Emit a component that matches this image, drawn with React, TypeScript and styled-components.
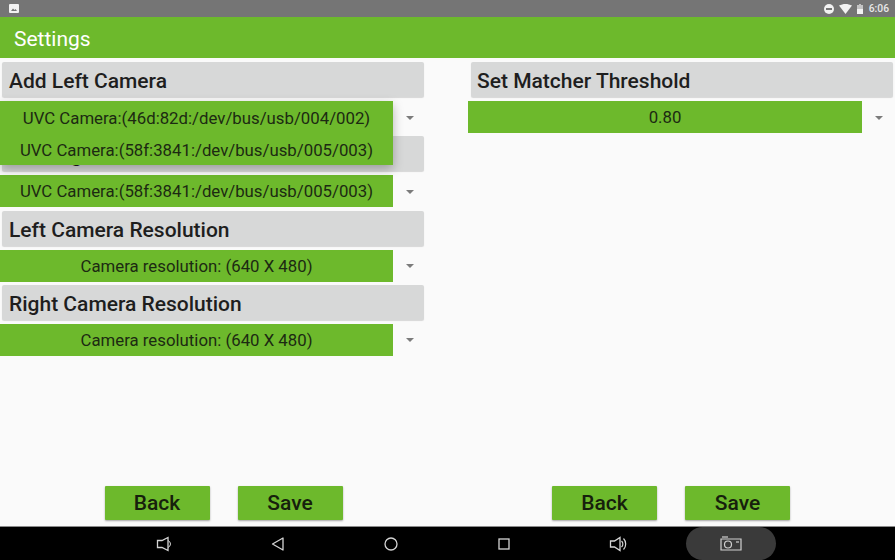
import React from 'react';
import styled, { createGlobalStyle } from 'styled-components';

const GREEN = '#6db92c';

const Global = createGlobalStyle`
  html, body { margin: 0; padding: 0; height: 100%; background: #fafafa; }
  body { font-family: Roboto, "Liberation Sans", sans-serif; overflow: hidden; }
  #root { height: 100%; }
`;

const Screen = styled.div`
  width: 895px;
  height: 560px;
  display: flex;
  flex-direction: column;
  background: #fafafa;
`;

const StatusBar = styled.div`
  height: 17px;
  flex: none;
  background: #757575;
  display: flex;
  align-items: center;
  justify-content: space-between;
  padding: 0 6px 0 9px;
  color: #f0f0f0;
`;

const StatusRight = styled.div`
  display: flex;
  align-items: center;
  gap: 5px;
`;

const Clock = styled.span`
  font-size: 10.3px;
  font-weight: 500;
  margin-left: 1px;
  color: #e8e8e8;
`;

const AppBar = styled.div`
  height: 41px;
  flex: none;
  background: ${GREEN};
  color: #fff;
  font-size: 21px;
  display: flex;
  align-items: center;
  padding: 2px 0 0 14px;
  box-sizing: border-box;
`;

const Content = styled.div`
  flex: 1;
  display: grid;
  grid-template-columns: 447px 448px;
  min-height: 0;
`;

const Column = styled.div<{ $inset: number }>`
  position: relative;
  display: flex;
  flex-direction: column;
  padding: 4px 0 0 ${({ $inset }) => $inset}px;
`;

const Section = styled.div`
  height: 74.3px;
  flex: none;
`;

const Heading = styled.div<{ $indent: number; $pad: number }>`
  width: 422px;
  height: 35px;
  margin-left: ${({ $indent }) => $indent}px;
  box-sizing: border-box;
  padding-left: ${({ $pad }) => $pad}px;
  background: #d7d8d8;
  border-radius: 2px;
  box-shadow: 0 1px 1px rgba(0, 0, 0, 0.14);
  color: #1e1e1e;
  font-size: 21px;
  font-weight: 500;
  line-height: 38px;
  white-space: nowrap;
`;

const Spinner = styled.div`
  margin-top: 4px;
  height: 32px;
  display: flex;
  align-items: center;
`;

const SpinnerValue = styled.div<{ $width: number }>`
  width: ${({ $width }) => $width}px;
  height: 100%;
  background: ${GREEN};
  color: #1c2a12;
  font-size: 16.8px;
  line-height: 33px;
  text-align: center;
  white-space: nowrap;
`;

const Caret = styled.div`
  margin-left: 13px;
  margin-top: 1px;
  width: 0;
  height: 0;
  border-left: 4px solid transparent;
  border-right: 4px solid transparent;
  border-top: 4px solid #7b7b7b;
`;

const Popup = styled.div`
  position: absolute;
  left: 0;
  top: 43px;
  width: 393px;
  height: 64px;
  background: ${GREEN};
  box-shadow: 0 4px 10px rgba(0, 0, 0, 0.28);
  color: #1c2a12;
  font-size: 16.8px;
  text-align: center;
  white-space: nowrap;
`;

const PopupItem = styled.div`
  height: 32px;
  line-height: 34px;
`;

const Actions = styled.div<{ $shift: number }>`
  margin-top: auto;
  margin-left: ${({ $shift }) => $shift}px;
  padding-bottom: 6px;
  display: flex;
  justify-content: center;
  gap: 28px;
`;

const ActionButton = styled.button`
  width: 105px;
  height: 34px;
  padding: 0;
  border: none;
  border-radius: 1px;
  background: ${GREEN};
  box-shadow: 0 1px 2px rgba(0, 0, 0, 0.35);
  color: #16200c;
  font-family: inherit;
  font-size: 21px;
  font-weight: 500;
`;

const NavBar = styled.div`
  height: 34px;
  flex: none;
  position: relative;
  background: #000;
  border-top: 1px solid #8a8a8a;
  box-sizing: border-box;
`;

const NavSlot = styled.div<{ $x: number }>`
  position: absolute;
  left: ${({ $x }) => $x}px;
  top: 8px;
  width: 18px;
  height: 18px;
  display: flex;
`;

const CameraPill = styled.div`
  position: absolute;
  left: 686px;
  top: 0;
  width: 90px;
  height: 33px;
  border-radius: 17px;
  background: #3a3a3a;
  display: flex;
  align-items: center;
  justify-content: center;
`;

const NavIcon = ({ children }: { children: React.ReactNode }) => (
  <svg width="18" height="18" viewBox="0 0 18 18" fill="none" stroke="#d4d4d4" strokeWidth="1.3">
    {children}
  </svg>
);

const leftCams = [
  { title: 'Add Left Camera', value: '' },
  { title: 'Add Right Camera', value: 'UVC Camera:(58f:3841:/dev/bus/usb/005/003)' },
  { title: 'Left Camera Resolution', value: 'Camera resolution: (640 X 480)' },
  { title: 'Right Camera Resolution', value: 'Camera resolution: (640 X 480)' },
];

const App = () => (
  <Screen>
    <Global />
    <StatusBar>
      <svg width="10" height="9" viewBox="0 0 10 9">
        <rect width="10" height="9" rx="1" fill="#f2f2f2" />
        <path d="M2 7l2-2.500 1.500 1.500 1-1L8 7z" fill="#757575" />
      </svg>
      <StatusRight>
        <svg width="10" height="10" viewBox="0 0 10 10">
          <circle cx="5" cy="5" r="5" fill="#f2f2f2" />
          <rect x="2" y="4" width="6" height="2" fill="#757575" />
        </svg>
        <svg width="13" height="10" viewBox="0 0 13 10">
          <path d="M0 1.600C4 -0.500 9 -0.500 13 1.600L6.500 10z" fill="#f2f2f2" />
        </svg>
        <svg width="6" height="10" viewBox="0 0 6 10">
          <rect x="2" y="0" width="2" height="1" fill="#c4c4c4" />
          <rect x="0" y="1" width="6" height="9" fill="#c4c4c4" />
          <rect x="0" y="5" width="6" height="5" fill="#f2f2f2" />
        </svg>
        <Clock>6:06</Clock>
      </StatusRight>
    </StatusBar>
    <AppBar>Settings</AppBar>
    <Content>
      <Column $inset={0}>
        {leftCams.map((item) => (
          <Section key={item.title}>
            <Heading $indent={2} $pad={7}>{item.title}</Heading>
            <Spinner>
              <SpinnerValue $width={393}>{item.value}</SpinnerValue>
              <Caret />
            </Spinner>
          </Section>
        ))}
        <Popup>
          <PopupItem>UVC Camera:(46d:82d:/dev/bus/usb/004/002)</PopupItem>
          <PopupItem>UVC Camera:(58f:3841:/dev/bus/usb/005/003)</PopupItem>
        </Popup>
        <Actions $shift={0}>
          <ActionButton>Back</ActionButton>
          <ActionButton>Save</ActionButton>
        </Actions>
      </Column>
      <Column $inset={21}>
        <Section>
          <Heading $indent={3} $pad={6}>Set Matcher Threshold</Heading>
          <Spinner>
            <SpinnerValue $width={394}>0.80</SpinnerValue>
            <Caret />
          </Spinner>
        </Section>
        <Actions $shift={-21}>
          <ActionButton>Back</ActionButton>
          <ActionButton>Save</ActionButton>
        </Actions>
      </Column>
    </Content>
    <NavBar>
      <NavSlot $x={155}>
        <NavIcon>
          <path d="M2.500 5.500h4.500L13 2.500v13L7 12.500H2.500z" />
          <path d="M13 5.500a4 4 0 0 1 2.500 3.500a4 4 0 0 1-2.500 3.500" strokeWidth="1" />
        </NavIcon>
      </NavSlot>
      <NavSlot $x={269}>
        <NavIcon>
          <path d="M14 3v12L3.500 9z" strokeLinejoin="round" />
        </NavIcon>
      </NavSlot>
      <NavSlot $x={382}>
        <NavIcon>
          <circle cx="9" cy="9" r="6" />
        </NavIcon>
      </NavSlot>
      <NavSlot $x={495}>
        <NavIcon>
          <rect x="4" y="4" width="10" height="10" />
        </NavIcon>
      </NavSlot>
      <NavSlot $x={609}>
        <NavIcon>
          <path d="M1.500 6h4L11 2.500v13L5.500 12h-4z" />
          <path d="M12.500 6a4 4 0 0 1 0 6M14.500 3.500a8 8 0 0 1 0 11" strokeWidth="1.200" />
        </NavIcon>
      </NavSlot>
      <CameraPill>
        <svg width="22" height="15" viewBox="0 0 22 15" fill="none" stroke="#d0d0d0" strokeWidth="1.200">
          <path d="M1 3h20v11H1z" />
          <path d="M2 1h6" />
          <circle cx="8" cy="8.500" r="3.500" />
          <path d="M16 6h3" />
        </svg>
      </CameraPill>
    </NavBar>
  </Screen>
);

export default App;
